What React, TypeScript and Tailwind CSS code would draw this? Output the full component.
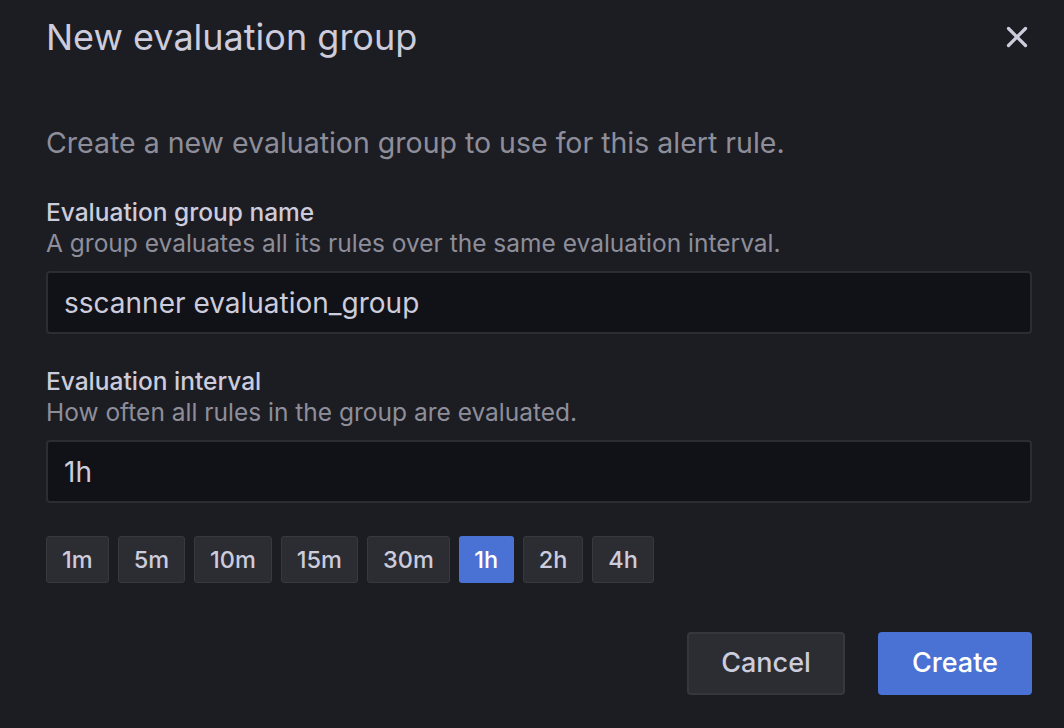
import React, { useState } from 'react';
import { X } from 'lucide-react';

const intervals = ['1m', '5m', '10m', '15m', '30m', '1h', '2h', '4h'];

const Field: React.FC<{ label: string; description: string; value: string }> = ({ label, description, value }) => (
  <div className="flex flex-col">
    <div className="text-[24.5px] leading-[30px] font-medium text-[#ccccdc]">{label}</div>
    <div className="text-[24.5px] leading-[32px] text-[#8e8e9b]">{description}</div>
    <div className="mt-[12px] h-[63px] rounded-[4px] border-2 border-[#2c2d33] bg-[#111217] px-[16px] flex items-center text-[28px] text-[#ccccdc]">
      {value}
    </div>
  </div>
);

const App: React.FC = () => {
  const [interval, setInterval] = useState('1h');

  return (
    <div className="w-[1064px] h-[728px] bg-[#1c1d22] font-['Inter',sans-serif] pl-[46px] pr-[32px] flex flex-col">
      <div className="flex items-start justify-between pt-[14px]">
        <h2 className="text-[36px] leading-[46px] text-[#ccccdc] font-normal">New evaluation group</h2>
        <button className="mt-[6px] mr-[-2px] text-[#ccccdc]">
          <X className="w-[34px] h-[34px]" strokeWidth={2.3} />
        </button>
      </div>

      <p className="mt-[65px] text-[28.5px] leading-[36px] text-[#8e8e9b]">
        Create a new evaluation group to use for this alert rule.
      </p>

      <div className="mt-[36px] flex flex-col gap-[32px]">
        <Field
          label="Evaluation group name"
          description="A group evaluates all its rules over the same evaluation interval."
          value="sscanner evaluation_group"
        />
        <Field label="Evaluation interval" description="How often all rules in the group are evaluated." value={interval} />
      </div>

      <div className="mt-[33px] flex gap-[9px]">
        {intervals.map((i) => (
          <button
            key={i}
            onClick={() => setInterval(i)}
            className={
              i === interval
                ? 'h-[47px] px-[15.5px] rounded-[3px] bg-[#4a72d4] text-[23.5px] font-medium text-white'
                : 'h-[47px] px-[15px] rounded-[3px] bg-[#2c2d33] border border-[#383940] text-[23.5px] font-medium text-[#ccccdc]'
            }
          >
            {i}
          </button>
        ))}
      </div>

      <div className="mt-[49px] flex justify-end gap-[33px]">
        <button className="h-[63px] w-[158px] rounded-[4px] bg-[#2c2d33] border-2 border-[#36373e] text-[27px] font-medium text-[#ccccdc]">
          Cancel
        </button>
        <button className="h-[63px] w-[154px] rounded-[4px] bg-[#4a72d4] text-[27px] font-medium text-white">
          Create
        </button>
      </div>
    </div>
  );
};

export default App;
